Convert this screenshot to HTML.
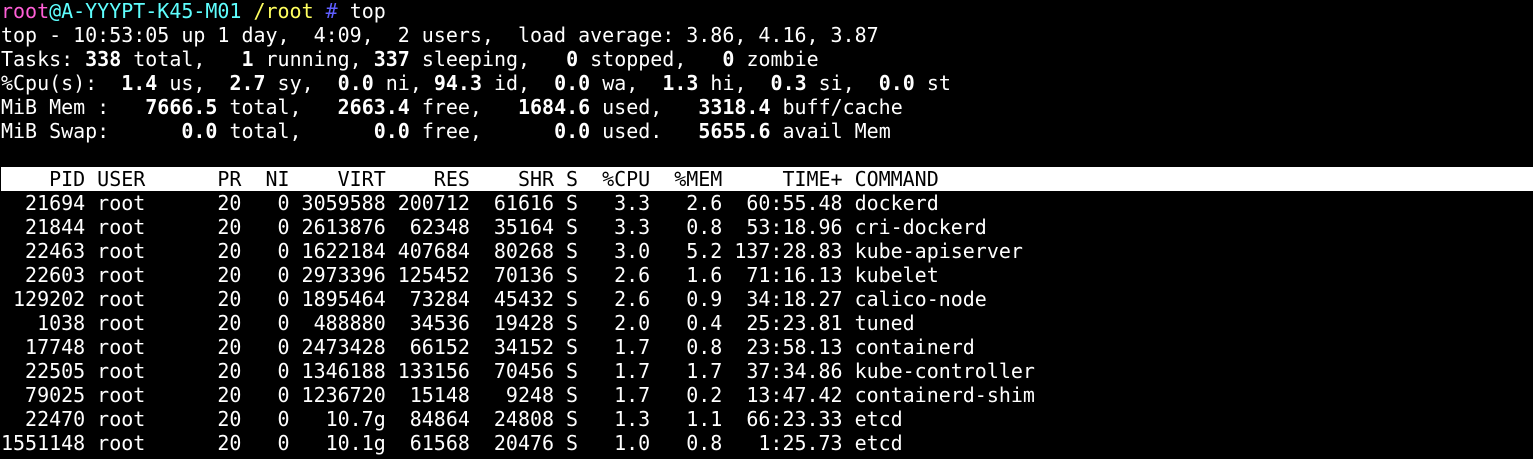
<!DOCTYPE html>
<html><head><meta charset="utf-8"><style>
html,body{margin:0;padding:0;background:#000;width:1533px;height:459px;overflow:hidden}
pre{margin:0;position:absolute;left:1px;top:-1px;font-family:"DejaVu Sans Mono","Liberation Mono",monospace;font-size:19.98px;line-height:24px;color:#fff;white-space:pre}
b{font-weight:bold}
.m{color:#ff5fd7}.c{color:#5fffff}.y{color:#ffff5f}.bl{color:#5f5fff}
.h{background:#fff;color:#000;display:inline-block;width:1532px}
</style></head><body><pre><span class="m">root</span><span class="c">@A-YYYPT-K45-M01</span> <span class="y">/root</span> <span class="bl">#</span> top
top - 10:53:05 up 1 day,  4:09,  2 users,  load average: 3.86, 4.16, 3.87
Tasks: <b>338</b> total,   <b>1</b> running, <b>337</b> sleeping,   <b>0</b> stopped,   <b>0</b> zombie
%Cpu(s):  <b>1.4</b> us,  <b>2.7</b> sy,  <b>0.0</b> ni, <b>94.3</b> id,  <b>0.0</b> wa,  <b>1.3</b> hi,  <b>0.3</b> si,  <b>0.0</b> st
MiB Mem :   <b>7666.5</b> total,   <b>2663.4</b> free,   <b>1684.6</b> used,   <b>3318.4</b> buff/cache
MiB Swap:      <b>0.0</b> total,      <b>0.0</b> free,      <b>0.0</b> used.   <b>5655.6</b> avail Mem

<span class="h">    PID USER      PR  NI    VIRT    RES    SHR S  %CPU  %MEM     TIME+ COMMAND</span>
  21694 root      20   0 3059588 200712  61616 S   3.3   2.6  60:55.48 dockerd
  21844 root      20   0 2613876  62348  35164 S   3.3   0.8  53:18.96 cri-dockerd
  22463 root      20   0 1622184 407684  80268 S   3.0   5.2 137:28.83 kube-apiserver
  22603 root      20   0 2973396 125452  70136 S   2.6   1.6  71:16.13 kubelet
 129202 root      20   0 1895464  73284  45432 S   2.6   0.9  34:18.27 calico-node
   1038 root      20   0  488880  34536  19428 S   2.0   0.4  25:23.81 tuned
  17748 root      20   0 2473428  66152  34152 S   1.7   0.8  23:58.13 containerd
  22505 root      20   0 1346188 133156  70456 S   1.7   1.7  37:34.86 kube-controller
  79025 root      20   0 1236720  15148   9248 S   1.7   0.2  13:47.42 containerd-shim
  22470 root      20   0   10.7g  84864  24808 S   1.3   1.1  66:23.33 etcd
1551148 root      20   0   10.1g  61568  20476 S   1.0   0.8   1:25.73 etcd
</pre></body></html>
